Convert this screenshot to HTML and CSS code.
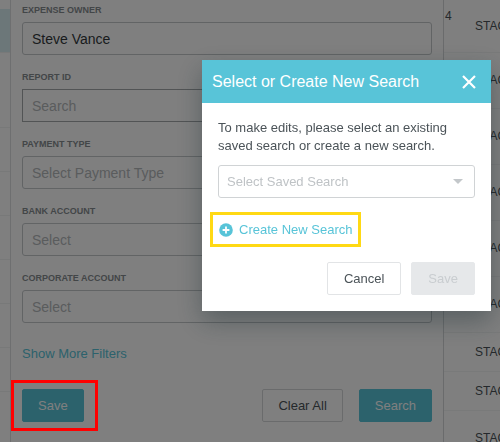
FILE: index.html
```html
<!DOCTYPE html>
<html lang="en">
<head>
<meta charset="utf-8">
<title>Select or Create New Search</title>
<link rel="stylesheet" href="styles.css">
</head>
<body>
<div class="page">
  <div class="rail">
    <div class="rail-row rail-row-active"></div>
    <div class="rail-row rail-row-tall"></div>
    <div class="rail-row"></div>
    <div class="rail-row"></div>
    <div class="rail-row"></div>
    <div class="rail-row"></div>
    <div class="rail-row"></div>
    <div class="rail-row"></div>
  </div>
  <form class="filters">
    <div class="field">
      <label for="owner">EXPENSE OWNER</label>
      <input id="owner" type="text" value="Steve Vance">
    </div>
    <div class="field">
      <label for="report">REPORT ID</label>
      <input id="report" class="square" type="text" placeholder="Search">
    </div>
    <div class="field">
      <label for="payment">PAYMENT TYPE</label>
      <select id="payment"><option>Select Payment Type</option></select>
    </div>
    <div class="field">
      <label for="bank">BANK ACCOUNT</label>
      <select id="bank"><option>Select</option></select>
    </div>
    <div class="field">
      <label for="corporate">CORPORATE ACCOUNT</label>
      <select id="corporate"><option>Select</option></select>
    </div>
    <a class="more" href="#">Show More Filters</a>
    <div class="actions">
      <span class="marked"><button type="button" class="btn primary">Save</button></span>
      <button type="button" class="btn push">Clear All</button>
      <button type="button" class="btn primary">Search</button>
    </div>
  </form>
  <div class="results">
    <span class="count">4</span>
    <table>
      <tbody>
        <tr class="first"><td>STAC</td></tr>
        <tr><td>STAC</td></tr>
        <tr><td>STAC</td></tr>
        <tr><td>STAC</td></tr>
        <tr><td>STAC</td></tr>
        <tr><td>STAC</td></tr>
        <tr class="compact"><td>STAC</td></tr>
        <tr class="compact"><td>STAC</td></tr>
        <tr><td>STAC</td></tr>
      </tbody>
    </table>
  </div>
</div>

<div class="overlay">
  <section class="dialog" role="dialog" aria-modal="true" aria-labelledby="dialog-title">
    <header class="dialog-head">
      <h1 id="dialog-title">Select or Create New Search</h1>
      <button type="button" class="close" aria-label="Close">
        <svg width="14" height="14" viewBox="0 0 14 14"><path d="M1 1l12 12M13 1L1 13" stroke="#fff" stroke-width="2.2" fill="none"/></svg>
      </button>
    </header>
    <div class="dialog-body">
      <p>To make edits, please select an existing saved search or create a new search.</p>
      <div class="picker">
        <select aria-label="Saved search"><option>Select Saved Search</option></select>
        <svg class="caret" width="10" height="5" viewBox="0 0 10 5"><path d="M0 0h10L5 5z" fill="#c3c7ca"/></svg>
      </div>
      <button type="button" class="create">
        <svg width="14" height="14" viewBox="0 0 14 14"><circle cx="7" cy="7" r="6.8" fill="#58c4d8"/><path d="M7 3.6v6.8M3.6 7h6.8" stroke="#fff" stroke-width="1.8"/></svg>
        <span>Create New Search</span>
      </button>
      <div class="dialog-actions">
        <button type="button" class="btn">Cancel</button>
        <button type="button" class="btn" disabled>Save</button>
      </div>
    </div>
  </section>
</div>
</body>
</html>
```
FILE: styles.css
```css
* { box-sizing: border-box; }

body {
  margin: 0;
  background: #fff;
  color: #4b5358;
  font: 13px/18px "Liberation Sans", Arial, sans-serif;
}

button, input, select { font: inherit; color: inherit; }

.page {
  display: flex;
  height: 100vh;
  overflow: hidden;
}

.rail {
  flex: 0 0 11px;
  padding-top: 9px;
  border-right: 1px solid #dcdfe0;
}
.rail-row { height: 44px; border-bottom: 1px solid #f0f2f3; }
.rail-row-active { background: #d8eef2; }
.rail-row-tall { height: 75px; }

.filters {
  flex: 1;
  padding: 2px 11px 0;
}
.field { margin-bottom: 14px; }
.field label {
  display: block;
  margin-bottom: 4px;
  color: #868c90;
  font-size: 9px;
  font-weight: bold;
  line-height: 16px;
}
.field input, .field select, .picker select {
  display: block;
  width: 100%;
  height: 33px;
  padding: 0 9px;
  border: 1px solid #c4c8ca;
  border-radius: 3px;
  background: #fff;
  font-size: 14px;
  appearance: none;
}
.field input { color: #33393c; }
.field .square { border-color: #a4a8aa; border-radius: 0; }
.field select { color: #b4b8bb; }
::placeholder { color: #b4b8bb; opacity: 1; }

.more {
  display: block;
  margin-top: 22px;
  color: #58c4d8;
  text-decoration: none;
}
.actions {
  display: flex;
  gap: 16px;
  margin-top: 26px;
}
.btn {
  height: 33px;
  padding: 0 15px;
  border: 1px solid #e2e4e6;
  border-radius: 2px;
  background: #fff;
}
.btn.primary { border-color: #58c4d8; background: #58c4d8; color: #fff; }
.btn:disabled { border-color: #e6e8ea; background: #e6e8ea; color: #c9cdd0; }
.push { margin-left: auto; }
.actions .push { border-color: #d4d7d9; }

.marked { position: relative; }
.marked::after {
  content: "";
  position: absolute;
  inset: -9px -14px -9px -11px;
  z-index: 2;
  border: 3px solid #f00;
  pointer-events: none;
}

.results {
  position: relative;
  flex: 0 0 57px;
  overflow: hidden;
  border-left: 1px solid #d4d7d9;
  color: #4b5358;
  font-size: 12px;
}
.count { position: absolute; top: 7px; left: 1px; }
.results table { width: 100%; border-collapse: collapse; }
.results tr { height: 56px; border-bottom: 1px solid #f3f4f5; }
.results .first { height: 52px; }
.results .compact { height: 39px; }
.results td { padding: 0 0 0 31px; }

.overlay {
  position: fixed;
  inset: 0;
  z-index: 1;
  display: flex;
  align-items: flex-start;
  justify-content: flex-end;
  padding: 60px 9px 0 0;
  background: rgba(0, 0, 0, 0.5);
}
.dialog {
  width: 289px;
  background: #fff;
  box-shadow: 0 10px 24px rgba(20, 40, 45, 0.36);
}
.dialog-head {
  display: flex;
  align-items: center;
  justify-content: space-between;
  height: 43px;
  padding: 0 15px 0 10px;
  background: #58c4d8;
  color: #fff;
}
.dialog-head h1 { margin: 0; font-size: 16px; font-weight: normal; }
.close {
  display: flex;
  padding: 0;
  border: 0;
  background: none;
}
.dialog-body { padding: 16px; }
.dialog-body p { margin: 0 0 10px; }
.picker { position: relative; }
.picker select {
  padding: 0 8px;
  border-color: #d0d3d5;
  color: #bfc3c6;
  font-size: 13px;
}
.caret { position: absolute; top: 14px; right: 12px; pointer-events: none; }
.create {
  display: flex;
  align-items: center;
  gap: 6px;
  height: 35px;
  margin: 14px 0 15px -8px;
  padding: 0 6px;
  border: 3px solid #ffd914;
  background: none;
  color: #58c4d8;
}
.dialog-actions {
  display: flex;
  justify-content: flex-end;
  gap: 10px;
}
.dialog-actions .btn { padding: 0 16px; }
```
